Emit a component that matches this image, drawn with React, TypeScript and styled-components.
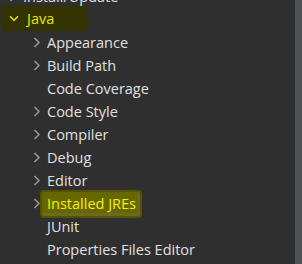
import styled, { createGlobalStyle } from "styled-components";

const Global = createGlobalStyle`
  html, body {
    margin: 0;
    padding: 0;
    background: #2f2f2f;
    overflow: hidden;
  }
`;

const Frame = styled.div`
  width: 302px;
  height: 264px;
  display: flex;
  overflow: hidden;
  background: #2f2f2f;
  font-family: "Open Sans", "Noto Sans", sans-serif;
  font-size: 14.5px;
  color: #e0e0e0;
`;

const Tree = styled.div`
  flex: 1;
  display: flex;
  flex-direction: column;
  margin-top: -15px;
`;

const ScrollTrack = styled.div`
  width: 7px;
  background: #4e5355;
`;

const Row = styled.div<{ $level: number }>`
  height: 23px;
  display: flex;
  align-items: center;
  padding-left: ${(p) => 6 + p.$level * 24}px;
  white-space: nowrap;
`;

const Twisty = styled.span`
  flex-shrink: 0;
  width: 13px;
  height: 23px;
  display: flex;
  align-items: center;
  justify-content: center;
  margin-right: 4px;
`;

const Label = styled.span`
  line-height: 23px;
`;

const JavaRow = styled.div`
  height: 23px;
  display: flex;
  align-items: center;
`;

const JavaMark = styled.div`
  flex-shrink: 0;
  box-sizing: border-box;
  height: 25px;
  margin-left: 2px;
  width: 86px;
  display: flex;
  align-items: center;
  padding-left: 5px;
  background: #333300;
  border-radius: 2px 6px 6px 2px;
  color: #e6e600;
  transform: translateY(-1px);
`;

const JavaLabel = styled.span`
  line-height: 23px;
  margin-left: 3px;
`;

const Selected = styled.span`
  margin-left: -5px;
  padding: 0 4px 0 5px;
  line-height: 24px;
  height: 24px;
  background: #676700;
  color: #f2f200;
  box-shadow: inset -3px -3px 0 #6b6b20, 0 0 0 2px #535300;
  border-radius: 2px;
`;

function Chevron({ open }: { open?: boolean }) {
  return open ? (
    <svg width="10" height="7" viewBox="0 0 10 7">
      <path d="M1 1.3 L5 5.3 L9 1.3" fill="none" stroke="#d8d800" strokeWidth="1.6" />
    </svg>
  ) : (
    <svg width="7" height="11" viewBox="0 0 7 11">
      <path d="M1.5 1 L6 5.5 L1.5 10" fill="none" stroke="#9a9a9a" strokeWidth="1.5" />
    </svg>
  );
}

const children: { name: string; kids: boolean }[] = [
  { name: "Appearance", kids: true },
  { name: "Build Path", kids: true },
  { name: "Code Coverage", kids: false },
  { name: "Code Style", kids: true },
  { name: "Compiler", kids: true },
  { name: "Debug", kids: true },
  { name: "Editor", kids: true },
  { name: "Installed JREs", kids: true },
  { name: "JUnit", kids: false },
  { name: "Properties Files Editor", kids: false },
];

export default function App() {
  return (
    <>
      <Global />
      <Frame>
        <Tree>
          <Row $level={0}>
            <Twisty>
              <Chevron />
            </Twisty>
            <Label>Install/Update</Label>
          </Row>
          <JavaRow>
            <JavaMark>
              <Twisty>
                <Chevron open />
              </Twisty>
              <JavaLabel>Java</JavaLabel>
            </JavaMark>
          </JavaRow>
          {children.map((c) => (
            <Row $level={1} key={c.name}>
              <Twisty>{c.kids && <Chevron />}</Twisty>
              {c.name === "Installed JREs" ? (
                <Selected>{c.name}</Selected>
              ) : (
                <Label>{c.name}</Label>
              )}
            </Row>
          ))}
        </Tree>
        <ScrollTrack />
      </Frame>
    </>
  );
}
